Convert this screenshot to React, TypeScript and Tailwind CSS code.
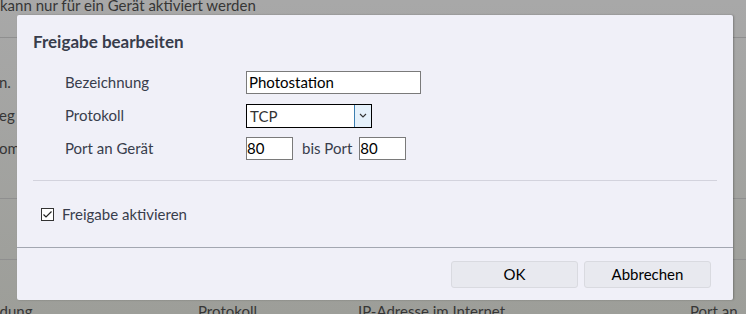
import React from 'react';

const font = { fontFamily: 'Lato, "Open Sans", sans-serif' };

const Field: React.FC<{ label: string; children: React.ReactNode }> = ({ label, children }) => (
  <div className="flex items-center h-[33px]">
    <div className="w-[181px] text-[15px] text-[#383d4c]">{label}</div>
    {children}
  </div>
);

export default function App() {
  return (
    <div
      className="relative w-[746px] h-[314px] overflow-hidden bg-gradient-to-b from-[#a8a8a8] to-[#9d9e99] text-[#363636]"
      style={font}
    >
      {/* page behind the overlay */}
      <div className="flex flex-col text-[15px]">
        <div className="-mt-[6px] h-[22px] leading-[22px]">kann nur für ein Gerät aktiviert werden</div>
        <div className="mt-[21px] border-t border-[#8f8f8f]" />
        <div className="mt-[34px] leading-[20px] -ml-[1px]">n.</div>
        <div className="mt-[13px] leading-[20px] -ml-[1px]">eg</div>
        <div className="mt-[13px] leading-[20px] -ml-[1px]">om</div>
        <div className="mt-[40px] border-t border-[#8f8f8f]" />
        <div className="mt-[60px] border-t border-[#8f8f8f]" />
        <div className="mt-[41px] flex leading-[20px]">
          <span className="w-[202px] -ml-[4px]">idung</span>
          <span className="w-[160px]">Protokoll</span>
          <span className="w-[332px]">IP-Adresse im Internet</span>
          <span>Port an</span>
        </div>
      </div>

      {/* dialog */}
      <div className="absolute left-[17px] top-[15px] w-[716px] h-[285px] bg-[#f0f0f8] rounded-[2px] shadow-[1px_0_2px_rgba(0,0,0,0.25)] flex flex-col">
        <div className="pl-[16px] pt-[17px] text-[17px] font-bold text-[#383d4c] leading-[20px]">Freigabe bearbeiten</div>

        <div className="pl-[48px] pt-[14px] flex flex-col">
          <Field label="Bezeichnung">
            <div className="w-[175px] h-[23px] bg-white border border-[#7a7a7a] pl-[2px] text-[15px] text-black leading-[21px]">
              Photostation
            </div>
          </Field>
          <Field label="Protokoll">
            <div className="w-[126px] h-[24px] bg-white border border-black flex">
              <div className="flex-1 pl-[3px] text-[15px] text-[#333] leading-[22px]">TCP</div>
              <div className="w-[17px] h-full bg-[#e5f1fb] border-l border-[#3c7fb1] flex items-center justify-center">
                <svg width="8" height="5" viewBox="0 0 8 5">
                  <path d="M1 1 L4 4 L7 1" fill="none" stroke="#333" strokeWidth="1.1" />
                </svg>
              </div>
            </div>
          </Field>
          <Field label="Port an Gerät">
            <div className="w-[47px] h-[23px] bg-white border border-[#7a7a7a] text-[15px] text-black leading-[21px]">80</div>
            <span className="ml-[9px] mr-[7px] text-[15px] text-[#383d4c]">bis Port</span>
            <div className="w-[47px] h-[23px] bg-white border border-[#7a7a7a] text-[15px] text-black leading-[21px]">80</div>
          </Field>
        </div>

        <div className="mx-[16px] mt-[15px] border-t border-[#d3d3dd]" />

        <label className="pl-[24px] mt-[23px] flex items-center gap-[8px] text-[15px] text-[#383d4c] leading-[20px]">
          <span className="w-[13px] h-[13px] border border-[#333] bg-white flex items-center justify-center">
            <svg width="11" height="9" viewBox="0 0 11 9">
              <path d="M1.5 4.5 L4 7 L9.5 1.5" fill="none" stroke="#222" strokeWidth="1.2" />
            </svg>
          </span>
          Freigabe aktivieren
        </label>

        <div className="mt-[23px] border-t border-[#a3a7b1]" />

        <div className="flex justify-end gap-[6px] pr-[22px] pt-[13px]">
          <button className="w-[127px] h-[27px] rounded-[3px] bg-[#e8e9ef] border border-[#d9dae0] text-[15px] text-black">OK</button>
          <button className="w-[127px] h-[27px] rounded-[3px] bg-[#e8e9ef] border border-[#d9dae0] text-[15px] text-black">Abbrechen</button>
        </div>
      </div>
    </div>
  );
}
